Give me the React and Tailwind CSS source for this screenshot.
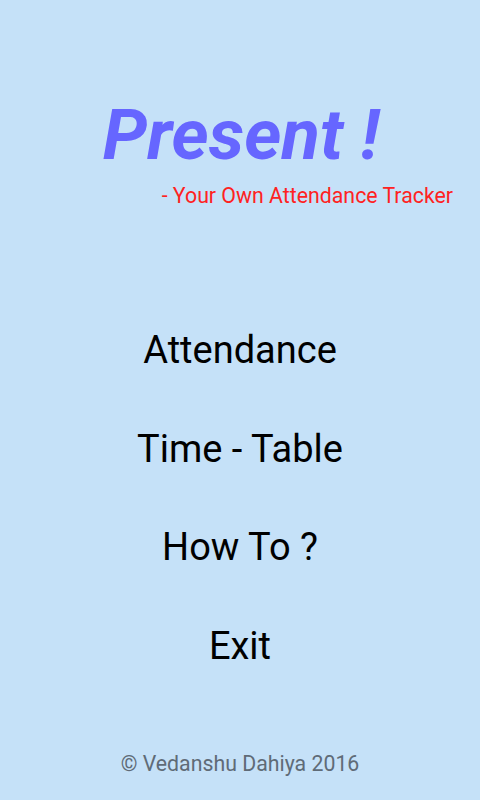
export default function App() {
  const items = ['Attendance', 'Time - Table', 'How To ?', 'Exit']
  return (
    <div className="w-[480px] h-[800px] bg-[#c5e1f8] flex flex-col items-center font-['Roboto',sans-serif]">
      <h1 className="mt-[93px] ml-[2px] text-[71px] leading-[84px] font-bold italic text-[#6666ff]">Present !</h1>
      <p className="self-end mr-[27px] mt-[7px] text-[21.3px] leading-[24px] text-[#ff2222]">- Your Own Attendance Tracker</p>
      <nav className="mt-[120px] flex flex-col items-center gap-[53.5px]">
        {items.map(t => (
          <span key={t} className="text-[38px] leading-[45px] text-black whitespace-pre">{t}</span>
        ))}
      </nav>
      <p className="mt-auto mb-[24px] text-[21.3px] leading-[24px] text-[#5f6b77]">© Vedanshu Dahiya 2016</p>
    </div>
  )
}
